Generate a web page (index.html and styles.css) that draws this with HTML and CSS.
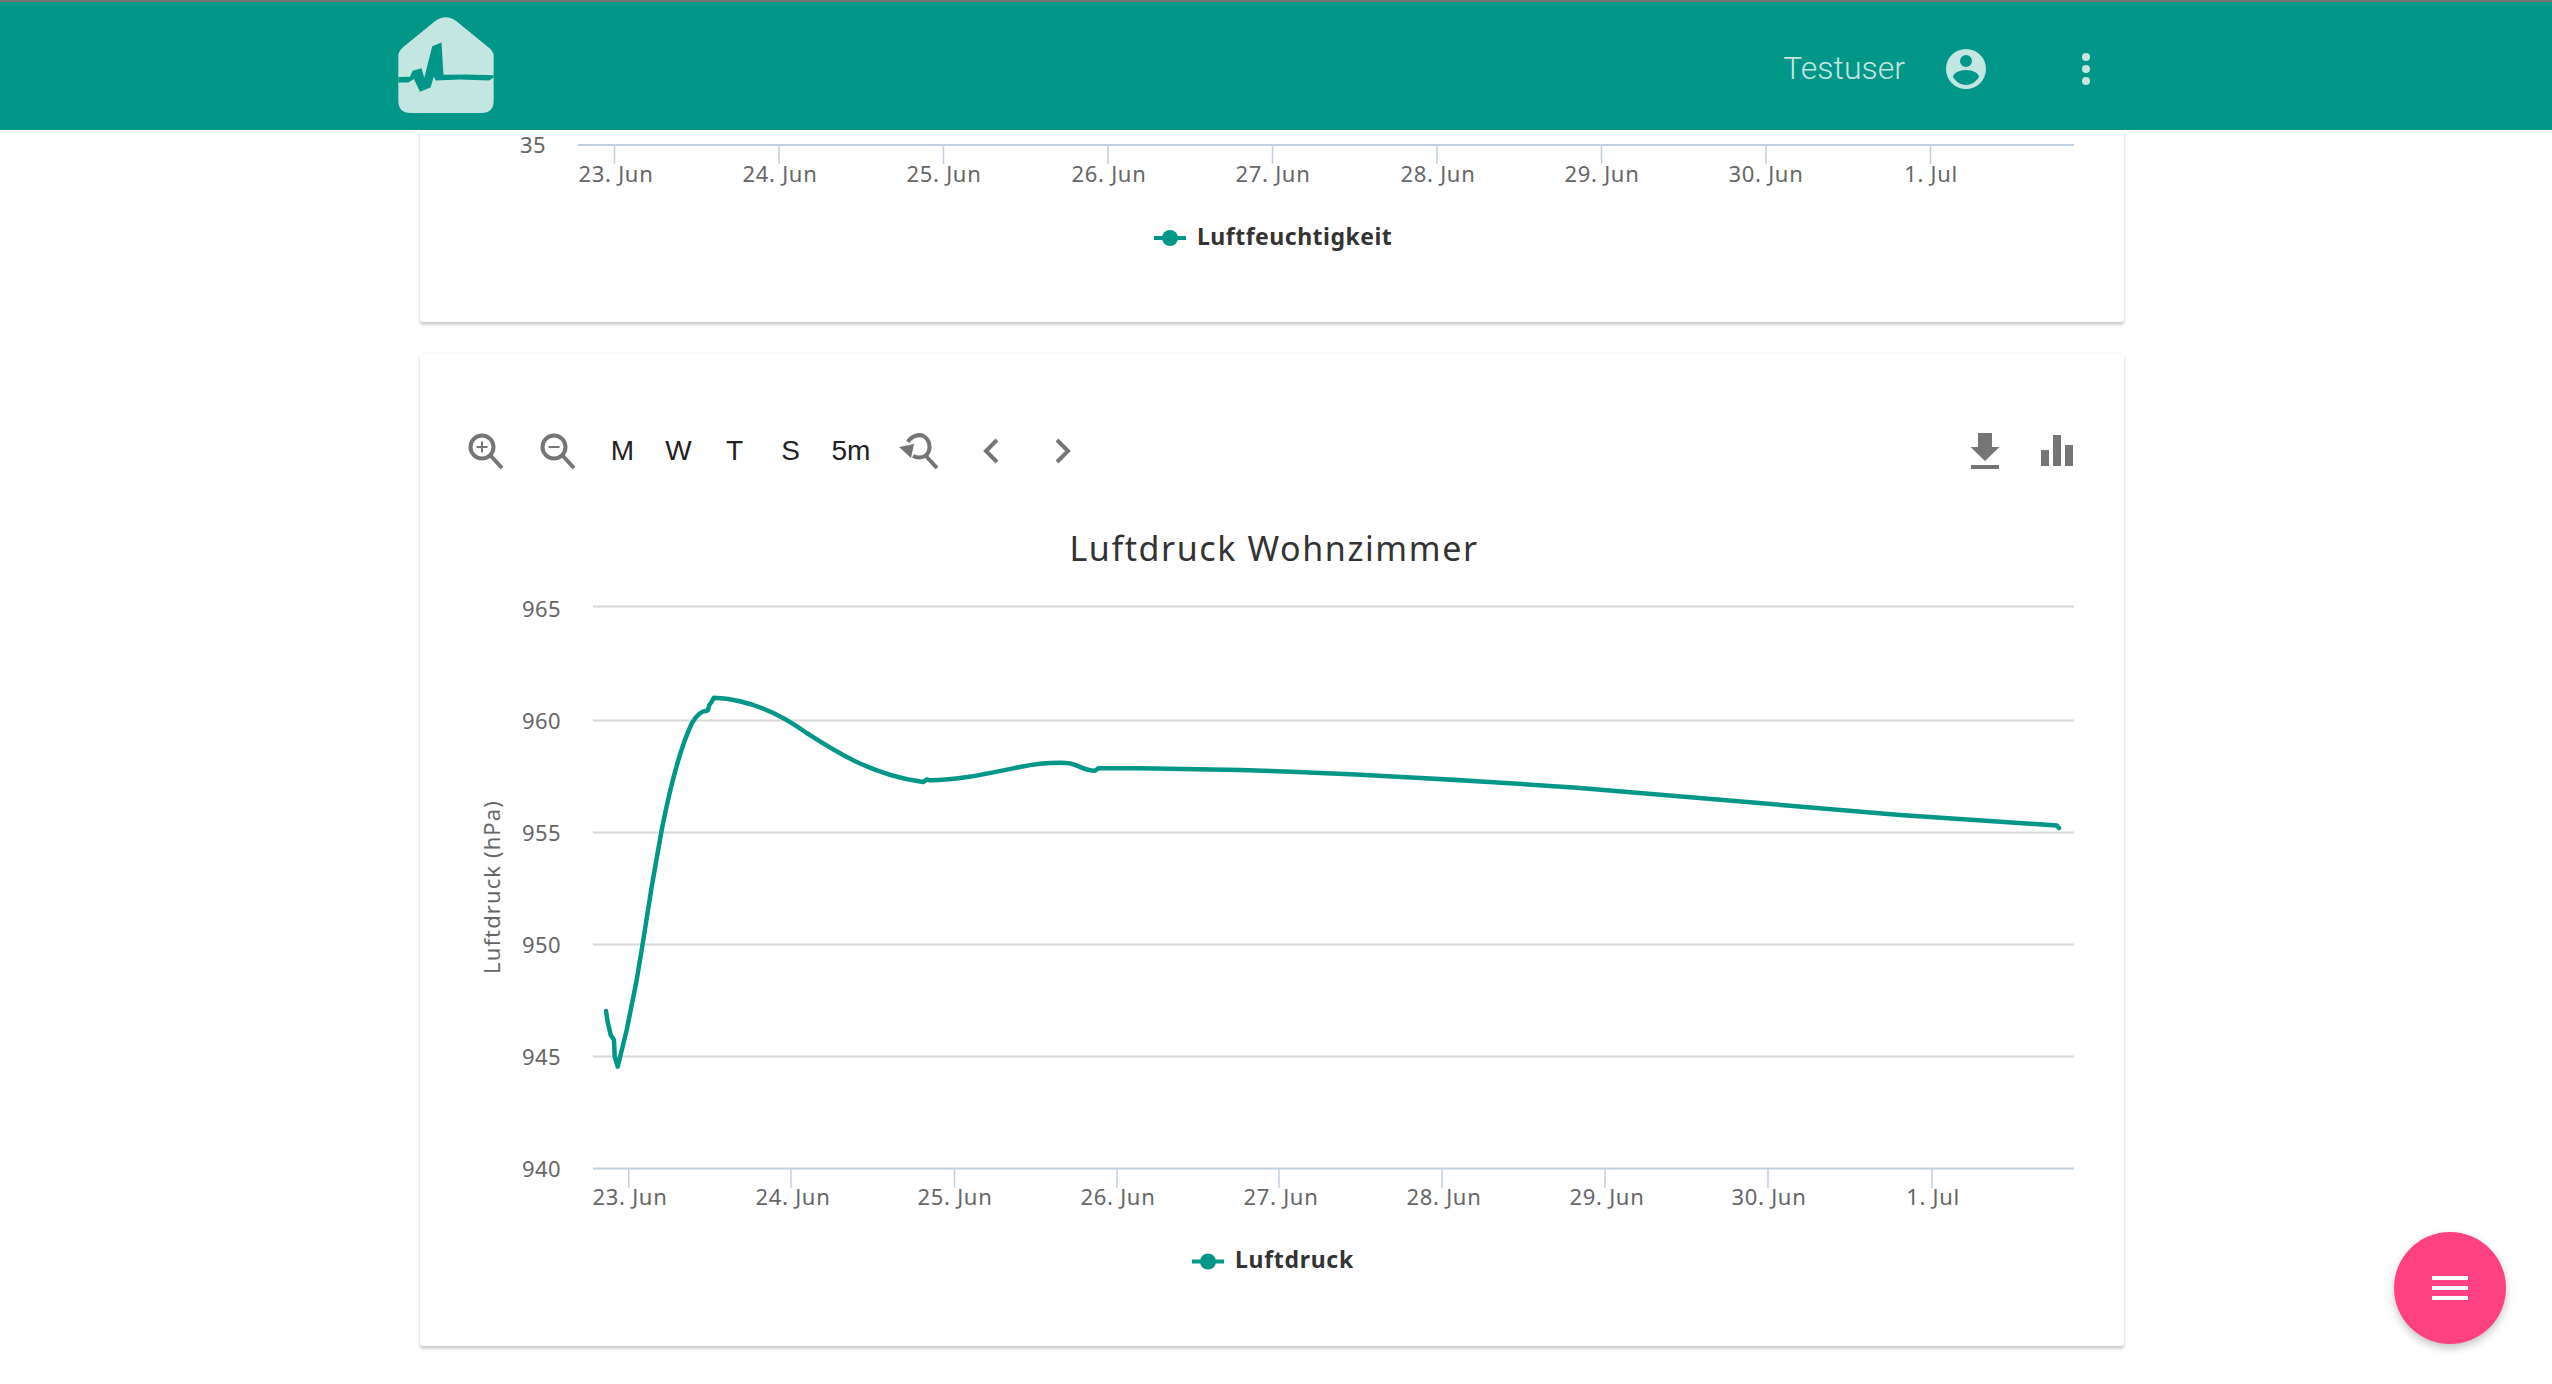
FILE: index.html
```html
<!DOCTYPE html>
<html lang="en">
<head>
  <meta charset="UTF-8">
  <title>Luftdruck</title>
  <link rel="stylesheet" href="styles.css">
</head>
<body>
  <header class="topbar">
    <svg class="logo" viewBox="175 53 287 289">
      <path class="logo-house" d="M175 170 Q175 155 190 143 L285 66 Q318 42 350 66 L445 143 Q462 155 462 170 L462 305 Q462 342 425 342 L212 342 Q175 342 175 305 Z"/>
      <path class="logo-pulse" d="M175 234 L210 233 L218 215 L245 207 L253 236 L277 141 L305 130 L311 227 L380 226 L462 228 L462 235 L448 244 L360 241 L287 244 L282 232 L272 265 L240 278 L222 240 L205 250 L175 250 Z"/>
    </svg>
    <div class="user">
      <span class="user-name">Testuser</span>
      <svg class="user-icon" viewBox="0 0 40 40">
        <path class="icon-light" fill-rule="evenodd" d="M20 0a20 20 0 1 0 0 40a20 20 0 1 0 0-40Z M20 6a6 6 0 1 1 0 12a6 6 0 1 1 0-12Z M20 21c7 0 12.500 3 13 7c-3 5-8 8-13 8s-10-3-13-8c.5-4 6-7 13-7Z"/>
      </svg>
      <svg class="user-more" viewBox="0 0 8 32">
        <circle class="icon-light" cx="4" cy="4" r="4"/>
        <circle class="icon-light" cx="4" cy="16" r="4"/>
        <circle class="icon-light" cx="4" cy="28" r="4"/>
      </svg>
    </div>
  </header>

  <main class="content">
    <section class="card card-cut">
      <svg class="chart" width="1704" height="192" viewBox="420 130 1704 192">
        <text class="label label-num" x="546" y="153" text-anchor="end">35</text>
        <path class="axis" d="M578 145H2074"/>
        <path class="tick" d="M614.500 145V164M779 145V164M943.500 145V164M1108 145V164M1272.500 145V164M1437 145V164M1601.500 145V164M1766 145V164M1930.500 145V164"/>
        <g class="label label-x" text-anchor="middle">
          <text x="616" y="182">23. Jun</text>
          <text x="780" y="182">24. Jun</text>
          <text x="944" y="182">25. Jun</text>
          <text x="1109" y="182">26. Jun</text>
          <text x="1273" y="182">27. Jun</text>
          <text x="1438" y="182">28. Jun</text>
          <text x="1602" y="182">29. Jun</text>
          <text x="1766" y="182">30. Jun</text>
          <text x="1931" y="182">1. Jul</text>
        </g>
        <path class="legend-line" d="M1154 238H1186"/>
        <circle class="legend-dot" cx="1170" cy="238" r="8"/>
        <text class="legend-text" x="1197" y="245">Luftfeuchtigkeit</text>
      </svg>
    </section>

    <section class="card">
      <div class="toolbar">
        <button class="tool" type="button">
          <svg viewBox="0 0 36 36"><circle class="ico" cx="14" cy="14" r="11.500"/><path class="ico" d="M22.500 22.500L34 35"/><path class="ico-thin" d="M8.500 14H19.500M14 8.500V19.500"/></svg>
        </button>
        <button class="tool" type="button">
          <svg viewBox="0 0 36 36"><circle class="ico" cx="14" cy="14" r="11.500"/><path class="ico" d="M22.500 22.500L34 35"/><path class="ico-thin" d="M8.500 14H19.500"/></svg>
        </button>
        <button class="tool-text" type="button">M</button>
        <button class="tool-text" type="button">W</button>
        <button class="tool-text" type="button">T</button>
        <button class="tool-text" type="button">S</button>
        <button class="tool-text tool-wide" type="button">5m</button>
        <button class="tool tool-reset" type="button">
          <svg viewBox="0 0 40 36"><path class="ico" d="M9 9C12 3 21 0 26 4C32 9 32 19 26 23C22 25 18 25 14 23"/><path class="ico" d="M26 22L38 35"/><path class="ico-fill" d="M0 14L15 11L12 25Z"/></svg>
        </button>
        <button class="tool" type="button">
          <svg viewBox="0 0 36 36"><path class="ico" d="M24 7L13 18L24 29"/></svg>
        </button>
        <button class="tool" type="button">
          <svg viewBox="0 0 36 36"><path class="ico" d="M12 7L23 18L12 29"/></svg>
        </button>
        <div class="toolbar-right">
          <button class="tool" type="button">
            <svg viewBox="0 0 36 36"><path class="ico-fill" d="M11 0H25V14H32.500L18 28L3.500 14H11Z M4 32H32V36H4Z"/></svg>
          </button>
          <button class="tool" type="button">
            <svg viewBox="0 0 36 36"><path class="ico-fill" d="M2 17H10V33H2Z M14 2H22V33H14Z M26 12H34V33H26Z"/></svg>
          </button>
        </div>
      </div>
      <svg class="chart" width="1704" height="859" viewBox="420 487 1704 859">
        <text class="title" x="1274" y="561" text-anchor="middle">Luftdruck Wohnzimmer</text>
        <path class="grid" d="M593 606.500H2074M593 720.500H2074M593 832.500H2074M593 944.500H2074M593 1056.500H2074"/>
        <g class="label label-num" text-anchor="end">
          <text x="561" y="617">965</text>
          <text x="561" y="729">960</text>
          <text x="561" y="841">955</text>
          <text x="561" y="953">950</text>
          <text x="561" y="1065">945</text>
          <text x="561" y="1177">940</text>
        </g>
        <text class="label label-y" transform="translate(500 887) rotate(-90)" text-anchor="middle">Luftdruck (hPa)</text>
        <path class="axis" d="M593 1168.500H2074"/>
        <path class="tick" d="M628.800 1169V1188M791 1169V1188M954.500 1169V1188M1117 1169V1188M1279 1169V1188M1442 1169V1188M1605 1169V1188M1768 1169V1188M1932 1169V1188"/>
        <g class="label label-x" text-anchor="middle">
          <text x="630" y="1205">23. Jun</text>
          <text x="793" y="1205">24. Jun</text>
          <text x="955" y="1205">25. Jun</text>
          <text x="1118" y="1205">26. Jun</text>
          <text x="1281" y="1205">27. Jun</text>
          <text x="1444" y="1205">28. Jun</text>
          <text x="1607" y="1205">29. Jun</text>
          <text x="1769" y="1205">30. Jun</text>
          <text x="1933" y="1205">1. Jul</text>
        </g>
        <path class="series" d="M606 1011L607.700 1022L610.700 1035L614 1040L614.700 1056.700L617.700 1066.700L626.700 1030L636.700 980L643.300 940L651.700 886.700L661.700 830C670 788 680 748 692 723C697 714 702 711 706.700 710.700L708 710L709.300 705L711.700 701.700L714 697.700C745 699 775 710 806.700 733C830 748 870 775 923 782L927 779.500L930 780.300C960 780 990 773 1020 767C1035 764 1055 762.500 1066.700 763C1075 763 1085 771 1095 770.700L1098.300 768.300L1140 768.300L1240 770C1350 773 1480 781 1577 787.700C1690 797 1800 807 1900 815L2056.700 825.500L2059 828"/>
        <path class="legend-line" d="M1192 1261.500H1224"/>
        <circle class="legend-dot" cx="1208" cy="1261.500" r="8"/>
        <text class="legend-text legend-short" x="1235" y="1268">Luftdruck</text>
      </svg>
    </section>
  </main>

  <button class="fab" type="button">
    <span class="fab-bar"></span>
    <span class="fab-bar"></span>
    <span class="fab-bar"></span>
  </button>
</body>
</html>
```

FILE: styles.css
```css
html, body {
  height: 100%;
}

body {
  margin: 0;
  background-color: #fff;
  overflow: hidden;
  font-family: "Liberation Sans", Arial, sans-serif;
}

.topbar {
  box-sizing: border-box;
  height: 130px;
  background-color: #009688;
  border-top: 2px solid #757575;
  padding: 0 462px 0 398px;
  display: flex;
  justify-content: space-between;
  align-items: center;
}

.logo {
  width: 96px;
  height: 96px;
  margin-top: -2px;
}

.logo-house, .icon-light {
  fill: #c4e6e2;
}

.logo-pulse {
  fill: #009688;
}

.user {
  display: flex;
  align-items: center;
  padding-top: 5px;
}

.user-name {
  font-family: Roboto, sans-serif;
  font-weight: 300;
  font-size: 32px;
  color: #c4e6e2;
  margin-top: -2px;
}

.user-icon {
  width: 40px;
  height: 40px;
  margin-left: 41px;
}

.user-more {
  width: 8px;
  height: 32px;
  margin-left: 96px;
}

.content {
  width: 1704px;
  margin-left: 420px;
}

.card {
  background-color: #fff;
  border-radius: 3px;
  box-shadow: 0 3px 3px rgba(0, 0, 0, 0.18), 0 0 3px rgba(0, 0, 0, 0.08);
  margin-bottom: 32px;
}

.card-cut {
  height: 192px;
  border-radius: 0 0 3px 3px;
}

.toolbar {
  display: flex;
  align-items: center;
  height: 72px;
  padding: 61px 0 0 30px;
}

.toolbar-right {
  display: flex;
  margin-left: auto;
  margin-right: 31px;
}

.tool, .tool-text {
  height: 72px;
  padding: 0;
  border: none;
  background: none;
  display: flex;
  align-items: center;
  justify-content: center;
  color: #212121;
  font-family: "Liberation Sans", Arial, sans-serif;
  font-size: 28px;
}

.tool {
  width: 72px;
}

.tool svg {
  width: 36px;
  height: 36px;
}

.tool-reset svg {
  width: 40px;
}

.tool-text {
  width: 56px;
  padding-left: 1px;
}

.tool-wide {
  width: 65px;
}

.ico {
  fill: none;
  stroke: #757575;
  stroke-width: 4;
}

.ico-thin {
  fill: none;
  stroke: #757575;
  stroke-width: 2;
}

.ico-fill {
  fill: #757575;
}

.chart {
  display: block;
  font-family: "Noto Sans", "Open Sans", sans-serif;
}

.label {
  font-size: 22px;
  fill: #666;
}

.label-num {
  letter-spacing: 0.4px;
}

.label-x {
  letter-spacing: 0.7px;
}

.label-y {
  letter-spacing: 1.1px;
}

.title {
  font-size: 34px;
  letter-spacing: 1.6px;
  fill: #333;
}

.legend-text {
  font-size: 23px;
  font-weight: 700;
  letter-spacing: 0.5px;
  fill: #333;
}

.legend-short {
  letter-spacing: 0.7px;
}

.axis {
  fill: none;
  stroke: #c0d0e0;
  stroke-width: 2;
}

.tick {
  fill: none;
  stroke: #c0d0e0;
  stroke-width: 1.500;
}

.grid {
  fill: none;
  stroke: #d8d8d8;
  stroke-width: 2;
}

.series {
  fill: none;
  stroke: #009688;
  stroke-width: 4.500;
  stroke-linejoin: round;
  stroke-linecap: round;
}

.legend-line {
  fill: none;
  stroke: #009688;
  stroke-width: 4;
}

.legend-dot {
  fill: #009688;
}

.fab {
  position: fixed;
  left: 2394px;
  top: 1232px;
  width: 112px;
  height: 112px;
  padding: 0;
  border: none;
  border-radius: 50%;
  background-color: #ff4081;
  box-shadow: 0 4px 8px rgba(0, 0, 0, 0.24);
  display: flex;
  flex-direction: column;
  align-items: center;
  justify-content: center;
  gap: 6px;
}

.fab-bar {
  width: 36px;
  height: 4px;
  background-color: #fff;
}
```
